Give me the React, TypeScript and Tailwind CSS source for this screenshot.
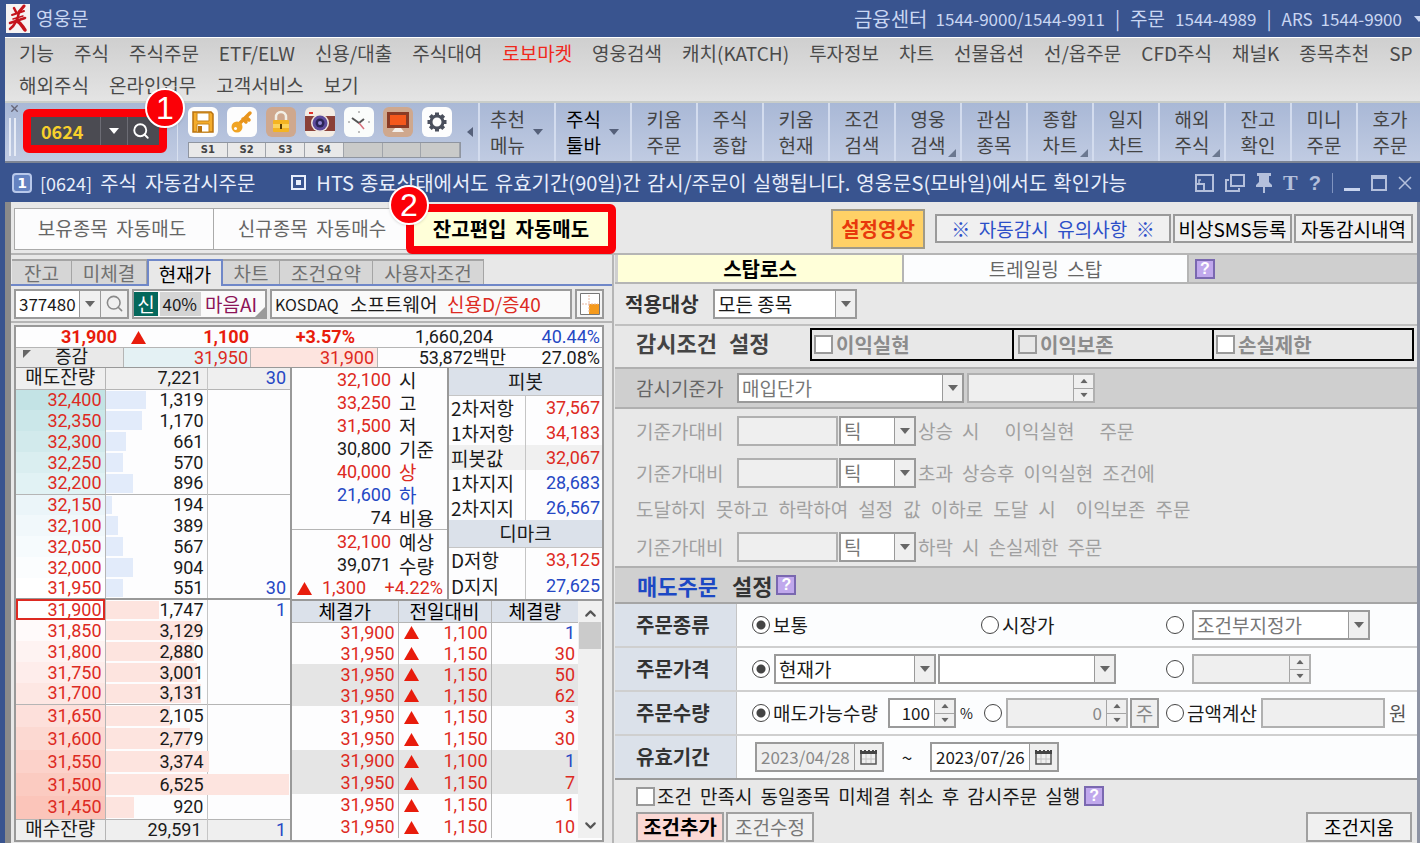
import type { ReactNode } from "react";
import { ChevronDown, ChevronUp, Search, X } from "lucide-react";
import clsx from "clsx";

const num = "font-['Roboto','Noto_Sans_CJK_KR',sans-serif] text-lg";
const smallNum = "text-[17px]";

const menuTop = [
  "기능", "주식", "주식주문", "ETF/ELW", "신용/대출", "주식대여", "로보마켓", "영웅검색", "캐치(KATCH)",
  "투자정보", "차트", "선물옵션", "선/옵주문", "CFD주식", "채널K", "종목추천", "SP",
];
const menuBottom = ["해외주식", "온라인업무", "고객서비스", "보기"];

const quickButtons = [
  { top: "키움", bottom: "주문" },
  { top: "주식", bottom: "종합" },
  { top: "키움", bottom: "현재" },
  { top: "조건", bottom: "검색" },
  { top: "영웅", bottom: "검색", more: true },
  { top: "관심", bottom: "종목" },
  { top: "종합", bottom: "차트", more: true },
  { top: "일지", bottom: "차트" },
  { top: "해외", bottom: "주식", more: true },
  { top: "잔고", bottom: "확인" },
  { top: "미니", bottom: "주문" },
  { top: "호가", bottom: "주문" },
];

const asks = [
  { price: "32,400", qty: 1319, bg: "bg-[#c3e3e5]" },
  { price: "32,350", qty: 1170, bg: "bg-[#cbe7e9]" },
  { price: "32,300", qty: 661, bg: "bg-[#d2eaec]" },
  { price: "32,250", qty: 570, bg: "bg-[#daeef0]" },
  { price: "32,200", qty: 896, bg: "bg-[#e1f2f4]" },
  { price: "32,150", qty: 194, bg: "bg-[#ebf5f9]" },
  { price: "32,100", qty: 389, bg: "bg-[#f1f8fb]" },
  { price: "32,050", qty: 567, bg: "bg-[#f6fbfd]" },
  { price: "32,000", qty: 904, bg: "bg-[#fbfdfe]" },
  { price: "31,950", qty: 551, bg: "bg-white", diff: 30 },
];

const bids = [
  { price: "31,900", qty: 1747, bg: "bg-white", diff: 1, current: true },
  { price: "31,850", qty: 3129, bg: "bg-[#fffafa]" },
  { price: "31,800", qty: 2880, bg: "bg-[#fef3f2]" },
  { price: "31,750", qty: 3001, bg: "bg-[#feedeb]" },
  { price: "31,700", qty: 3131, bg: "bg-[#fde7e3]" },
  { price: "31,650", qty: 2105, bg: "bg-[#fde0db]" },
  { price: "31,600", qty: 2779, bg: "bg-[#fcd9d2]" },
  { price: "31,550", qty: 3374, bg: "bg-[#fcd2ca]" },
  { price: "31,500", qty: 6525, bg: "bg-[#fbcbc1]" },
  { price: "31,450", qty: 920, bg: "bg-[#fbc5ba]" },
];

const priceInfo = [
  { value: "32,100", label: "시", color: "text-[#dd2a22]" },
  { value: "33,250", label: "고", color: "text-[#dd2a22]" },
  { value: "31,500", label: "저", color: "text-[#dd2a22]" },
  { value: "30,800", label: "기준" },
  { value: "40,000", label: "상", color: "text-[#dd2a22]", labelColor: "text-[#dd2a22]" },
  { value: "21,600", label: "하", color: "text-[#2548c4]", labelColor: "text-[#2548c4]" },
  { value: "74", label: "비용" },
];

interface Pivot {
  label: string;
  value: string;
  up?: boolean;
  mid?: boolean;
}

const pivots: Pivot[] = [
  { label: "2차저항", value: "37,567", up: true },
  { label: "1차저항", value: "34,183", up: true },
  { label: "피봇값", value: "32,067", up: true, mid: true },
  { label: "1차지지", value: "28,683" },
  { label: "2차지지", value: "26,567" },
];

const demark: Pivot[] = [
  { label: "D저항", value: "33,125", up: true },
  { label: "D지지", value: "27,625" },
];

const trades = [
  { price: "31,900", diff: "1,100", qty: 1, sell: true },
  { price: "31,950", diff: "1,150", qty: 30 },
  { price: "31,950", diff: "1,150", qty: 50, shade: true },
  { price: "31,950", diff: "1,150", qty: 62, shade: true },
  { price: "31,950", diff: "1,150", qty: 3 },
  { price: "31,950", diff: "1,150", qty: 30 },
  { price: "31,900", diff: "1,100", qty: 1, sell: true, shade: true },
  { price: "31,950", diff: "1,150", qty: 7, shade: true },
  { price: "31,950", diff: "1,150", qty: 1 },
  { price: "31,950", diff: "1,150", qty: 10 },
];

const Down = ({ className }: { className?: string }) => (
  <svg viewBox="0 0 10 6" className={clsx("h-[6px] w-[10px] shrink-0", className)} fill="currentColor">
    <path d="M0 0h10L5 6z" />
  </svg>
);

const UpMark = ({ className }: { className?: string }) => (
  <svg viewBox="0 0 15 13" className={clsx("h-[13px] w-[15px] shrink-0 text-[#e81c0c]", className)} fill="currentColor">
    <path d="M7.500 0L15 13H0z" />
  </svg>
);

const Badge = ({ n, className }: { n: number; className: string }) => (
  <span
    className={clsx(
      "absolute z-20 flex size-10 items-center justify-center rounded-full border-2 border-white bg-[#fb0007] font-['Liberation_Sans',sans-serif] text-[32px] leading-none font-normal text-white shadow",
      className,
    )}
  >
    {n}
  </span>
);

const Help = () => (
  <button
    aria-label="도움말"
    className="flex size-5 shrink-0 items-center justify-center border-2 border-[#7a68b0] bg-[#c0a8ec] font-['Liberation_Sans',sans-serif] text-base leading-none font-bold text-white"
  >
    ?
  </button>
);

interface SelectProps {
  label: string;
  value: string;
  className: string;
  dim?: boolean;
}

const SelectBox = ({ label, value, className, dim }: SelectProps) => (
  <span className={clsx("relative flex h-[30px] shrink-0 border-2 border-[#9a9a9a] bg-white", className)}>
    <select
      aria-label={label}
      defaultValue={value}
      className={clsx("w-full appearance-none pl-[3px] leading-6 outline-none", dim ? "text-[#777]" : "text-[#1a1a1a]")}
    >
      <option>{value}</option>
    </select>
    <span className="pointer-events-none absolute inset-y-0 right-0 flex w-5 items-center justify-center border-l border-[#9a9a9a] bg-[#efefef] text-[#666]">
      <Down />
    </span>
  </span>
);

interface SpinProps {
  label: string;
  value?: string;
  className: string;
  disabled?: boolean;
}

const Spin = ({ label, value = "", className, disabled }: SpinProps) => (
  <span
    className={clsx(
      "flex h-[30px] shrink-0 border-2",
      disabled ? "border-[#b0b0b0] bg-[#efefef]" : "border-[#9a9a9a] bg-white",
      className,
    )}
  >
    <input
      aria-label={label}
      defaultValue={value}
      disabled={disabled}
      className={clsx("w-0 min-w-0 grow pr-1 text-right", smallNum, disabled ? "text-[#888]" : "text-[#1a1a1a]")}
    />
    <span className="flex w-5 flex-col border-l border-[#a5a5a5] bg-[#efefef] text-[#666]">
      <button aria-label={`${label} 올림`} className="flex grow items-center justify-center border-b border-[#a5a5a5]">
        <Down className="scale-75 rotate-180" />
      </button>
      <button aria-label={`${label} 내림`} className="flex grow items-center justify-center">
        <Down className="scale-75" />
      </button>
    </span>
  </span>
);

const DateBox = ({ label, value, disabled }: { label: string; value: string; disabled?: boolean }) => (
  <span
    className={clsx(
      "flex h-[30px] w-[129px] shrink-0 border-2 border-[#9a9a9a]",
      disabled ? "bg-[#efefef]" : "bg-white",
    )}
  >
    <input
      aria-label={label}
      defaultValue={value}
      disabled={disabled}
      className={clsx("w-0 min-w-0 grow pl-1", smallNum, disabled ? "text-[#888]" : "text-[#1a1a1a]")}
    />
    <button
      aria-label={`${label} 달력`}
      className="flex w-7 items-center justify-center border-l border-[#9a9a9a] bg-[#efefef]"
    >
      <svg viewBox="0 0 17 15" className="h-[15px] w-[17px]" fill="none">
        <path d="M1 4v10h15V4" stroke="#555" strokeWidth="1.500" />
        <path d="M0 0h2v1h2V0h2v1h2V0h2v1h2V0h2v1h1V0h2v4H0z" fill="#444" />
        <path d="M6 4v9M11 4v9M2 9h13" stroke="#c4c4c4" />
      </svg>
    </button>
  </span>
);

interface RadioProps {
  name: string;
  label: string;
  hideLabel?: boolean;
  checked?: boolean;
  className?: string;
}

const Radio = ({ name, label, hideLabel, checked, className }: RadioProps) => (
  <label className={clsx("flex shrink-0 items-center gap-[3px] whitespace-nowrap", className)}>
    <input
      type="radio"
      name={name}
      aria-label={label}
      defaultChecked={checked}
      className="size-[18px] shrink-0 appearance-none rounded-full border border-[#444] bg-white checked:bg-[radial-gradient(circle,#444_0_4px,white_5px)]"
    />
    {!hideLabel && label}
  </label>
);

const check = "size-[19px] shrink-0 appearance-none border-2 border-[#9a9a9a]";

const TitleBar = () => (
  <header className="flex h-[37px] items-center text-[#c9d6f2]">
    <svg viewBox="0 0 24 29" className="ml-1.5 h-[29px] w-6 shrink-0">
      <rect width="24" height="29" fill="#f6f3f3" />
      <g stroke="#c4141c" strokeLinecap="round" fill="none">
        <path d="M8 4l2 4" strokeWidth="2.500" />
        <path d="M18 2l-5 6" strokeWidth="3" />
        <path d="M6 11l12-4" strokeWidth="2" />
        <path d="M7 15l10-3" strokeWidth="1.500" />
        <path d="M4 19l15-5" strokeWidth="2.500" />
        <path d="M13 8c-1 7-4 13-9 17" strokeWidth="2.500" />
        <path d="M11 17c4 2 5 5 8 9" strokeWidth="3.500" />
      </g>
    </svg>
    <h1 className="ml-1.5">영웅문</h1>
    <div className="ml-auto flex items-center whitespace-pre">
      <span className="text-xl">금융센터</span>
      <span className={clsx("ml-2", smallNum)}>1544-9000/1544-9911</span>
      <span className="mx-2.5">|</span>
      <span>주문</span>
      <span className={clsx("ml-2.5", smallNum)}>1544-4989</span>
      <span className="mx-2.5">|</span>
      <span className={smallNum}>ARS</span>
      <span className={clsx("ml-2", smallNum)}>1544-9900</span>
    </div>
    <Down className="-mr-1 ml-3" />
  </header>
);

const MenuBar = () => (
  <nav className="flex h-16 flex-col gap-0.5 overflow-hidden border-t border-white bg-linear-to-b from-[#cfcfcf] to-[#e4e4e4] pl-3.5 leading-[30px] text-[#4a4a4a]">
    {[menuTop, menuBottom].map((items, i) => (
      <div key={i} className="flex gap-5">
        {items.map((item) => (
          <a key={item} href="#" className={clsx("whitespace-nowrap", item === "로보마켓" && "text-[#f0281c]")}>
            {item}
          </a>
        ))}
      </div>
    ))}
  </nav>
);

const toolIcons: { name: string; bg: string; icon: ReactNode }[] = [
  {
    name: "저장",
    bg: "bg-[#fdfdfd]",
    icon: (
      <svg viewBox="0 0 24 24" className="size-6">
        <path d="M2 2h18l2 2v18H2z" fill="#f4ac2c" stroke="#b8720f" strokeWidth="1.500" />
        <path d="M6 3h12v8H6z" fill="#fff" stroke="#c8861c" />
        <path d="M6 14h12v8H6z" fill="#fff" stroke="#c8861c" />
        <path d="M7 16h4v6H7z" fill="#b8720f" />
      </svg>
    ),
  },
  {
    name: "키",
    bg: "bg-[#fdfdfd]",
    icon: (
      <svg viewBox="0 0 24 24" className="size-6">
        <path d="M9 14L20 3m-4 4l3 3m-6-1l3 3" stroke="#e8941c" strokeWidth="3.500" strokeLinecap="round" />
        <circle cx="7" cy="17" r="5.500" fill="#f0a424" />
        <circle cx="5.500" cy="18.500" r="1.500" fill="#fff" />
      </svg>
    ),
  },
  {
    name: "잠금",
    bg: "bg-[#cfa88e]",
    icon: (
      <svg viewBox="0 0 24 24" className="size-6">
        <path d="M7 11V7a5 5 0 0110 0v4" fill="none" stroke="#f2efe6" strokeWidth="2.500" />
        <rect x="4" y="10" width="16" height="12" rx="1" fill="#f4b422" />
        <path d="M4 14h16v4H4z" fill="#fbd35c" />
        <path d="M11 14h2v5h-2z" fill="#5a3d05" />
      </svg>
    ),
  },
  {
    name: "캡처",
    bg: "bg-[#f3ece4]",
    icon: (
      <svg viewBox="0 0 30 24" className="h-6 w-[30px]">
        <path d="M0 6h30v15H0z" fill="#8a4038" />
        <path d="M4 2h4v2H4z" fill="#e03028" />
        <circle cx="15" cy="13" r="9" fill="#efe6de" />
        <circle cx="15" cy="13" r="7.500" fill="#5d4c9c" />
        <circle cx="15" cy="13" r="4.500" fill="#2a2456" />
        <circle cx="15" cy="13" r="2" fill="#8f86d4" />
      </svg>
    ),
  },
  {
    name: "시간",
    bg: "bg-[#fafcfb]",
    icon: (
      <svg viewBox="0 0 24 24" className="size-6" fill="none">
        <path d="M12 1v2M12 21v2M1 12h2M21 12h2" stroke="#aaa" strokeWidth="1.500" />
        <path d="M5 8l7 5 5-4" stroke="#555" strokeWidth="2" />
        <path d="M12 13l5 6" stroke="#d8707c" strokeWidth="1.500" />
      </svg>
    ),
  },
  {
    name: "화면",
    bg: "bg-[#cfa88e]",
    icon: (
      <svg viewBox="0 0 24 24" className="size-6">
        <path d="M1 2h22v16H1z" fill="#8a3a24" />
        <path d="M4 5h16v10H4z" fill="#f4581c" />
        <path d="M9 18h6l3 4H6z" fill="#f4efea" />
      </svg>
    ),
  },
  {
    name: "설정",
    bg: "bg-[#fdfdfd]",
    icon: (
      <svg viewBox="0 0 24 24" className="size-6" fill="none" stroke="#4a4f5c">
        <circle cx="12" cy="12" r="6" strokeWidth="3" />
        <path
          d="M12 2.500v3M12 18.500v3M2.500 12h3M18.500 12h3M5.300 5.300l2 2M16.700 16.700l2 2M5.300 18.700l2-2M16.700 7.300l2-2"
          strokeWidth="4"
        />
      </svg>
    ),
  },
];

const Toolbar = () => (
  <div className="flex h-[62px] overflow-hidden border-y-2 border-t-[#c9cdc9] border-b-[#7d8594] bg-linear-to-b from-[#a9b8d6] to-[#c0cbe2]">
    <div className="w-[18px] shrink-0 pl-1 text-[#667]">
      <button aria-label="닫기" className="mb-1 block">
        <X size={11} strokeWidth={3} />
      </button>
      <span className="flex h-[38px] w-[7px] border-x-2 border-[#e6ebf5]" />
    </div>
    <div className="mt-1.5 flex h-11 w-36 shrink-0 rounded-md border-8 border-[#fb0007] bg-[#4b4b52]">
      <input
        aria-label="화면번호"
        defaultValue="0624"
        className="w-0 min-w-0 grow pl-2.5 text-lg font-bold text-[#f8d02c]"
      />
      <button aria-label="화면 목록" className="flex w-[27px] items-center justify-center border-l border-[#6c6c74] text-white">
        <Down />
      </button>
      <button aria-label="화면 검색" className="flex w-8 items-center border-l border-[#6c6c74] pl-1 text-white">
        <Search size={18} strokeWidth={2.500} />
      </button>
    </div>
    <span className="ml-2.5 w-px shrink-0 bg-[#d8e0ef]" />
    <div className="ml-2.5 flex w-[273px] shrink-0 flex-col justify-between pt-1 pb-[3px]">
      <div className="flex gap-[9px]">
        {toolIcons.map((t) => (
          <button
            key={t.name}
            aria-label={t.name}
            className={clsx("flex size-[30px] items-center justify-center overflow-hidden rounded-md", t.bg)}
          >
            {t.icon}
          </button>
        ))}
      </div>
      <div className="grid h-4 grid-cols-7 border border-[#8f95a0] font-['DejaVu_Sans',sans-serif] text-[10px] leading-[14px] font-bold text-[#444]">
        {["S1", "S2", "S3", "S4", "", "", ""].map((s, i) => (
          <button key={i} aria-label={`단축 ${i + 1}`} className={clsx("border-r border-[#a0a4aa]", s ? "bg-[#e9e9e9]" : "bg-[#c9cac9]")}>
            {s}
          </button>
        ))}
      </div>
    </div>
    <button aria-label="이전" className="flex w-[17px] shrink-0 items-center justify-center text-[#55607a]">
      <Down className="rotate-90" />
    </button>
    {[
      { top: "추천", bottom: "메뉴", color: "text-[#444]" },
      { top: "주식", bottom: "툴바", color: "text-black" },
    ].map((b) => (
      <button
        key={b.bottom}
        className={clsx("flex w-[76px] shrink-0 items-center gap-2 border-l-2 border-[#d3dcee] pl-2.5 leading-[26px]", b.color)}
      >
        <span>
          {b.top}
          <br />
          {b.bottom}
        </span>
        <Down className="text-[#55607a]" />
      </button>
    ))}
    {quickButtons.map((b, i) => (
      <button
        key={i}
        className="relative w-[66px] shrink-0 border-l-2 border-[#d3dcee] text-center leading-[26px] text-[#444]"
      >
        {b.top}
        <br />
        {b.bottom}
        {b.more && (
          <svg viewBox="0 0 8 8" className="absolute right-1 bottom-1 size-2" fill="#6b7890">
            <path d="M8 0v8H0z" />
          </svg>
        )}
      </button>
    ))}
  </div>
);

const WindowTitle = () => (
  <div className="flex h-[39px] items-center overflow-hidden pr-2 pl-[7px] whitespace-nowrap text-[#e8eefb]">
    <span className="flex size-5 shrink-0 items-center justify-center rounded-sm border-2 border-[#b8c8ea] bg-[#6482c0] font-['DejaVu_Sans',sans-serif] text-sm font-bold text-white">
      1
    </span>
    <h2 className="ml-2 flex items-center gap-2 text-xl">
      <span className="text-lg">[0624]</span>
      <span>주식</span>
      <span>자동감시주문</span>
    </h2>
    <span className="ml-9 flex size-[15px] shrink-0 items-center justify-center border-2 border-[#e8eefb]">
      <span className="size-[5px] bg-[#e8eefb]" />
    </span>
    <p className="ml-2.5 flex gap-1.5 text-xl">
      {["HTS", "종료상태에서도", "유효기간(90일)간", "감시/주문이", "실행됩니다.", "영웅문S(모바일)에서도", "확인가능"].map((w) => (
        <span key={w}>{w}</span>
      ))}
    </p>
    <div className="ml-auto flex items-center gap-[11px] text-[#b4c0dc]">
      <button aria-label="크기">
        <svg viewBox="0 0 19 18" className="h-[18px] w-[19px]" fill="none" stroke="currentColor" strokeWidth="2">
          <path d="M1 9V1h17v16h-8" />
          <path d="M1 10h8v7H1z" />
          <path d="M6 6h-2v3" strokeWidth="1.500" />
        </svg>
      </button>
      <button aria-label="복사">
        <svg viewBox="0 0 20 18" className="h-[18px] w-5" fill="none" stroke="currentColor" strokeWidth="2">
          <path d="M6 1h13v11H6z" />
          <path d="M4 6H1v11h13v-3" />
        </svg>
      </button>
      <button aria-label="고정">
        <svg viewBox="0 0 16 20" className="h-5 w-4" fill="currentColor">
          <path d="M1 0h14v3h-2v6l3 3v2H9v6H7v-6H0v-2l3-3V3H1z" />
        </svg>
      </button>
      <button aria-label="글꼴" className="font-['Liberation_Serif',serif] text-[22px] leading-none font-bold">
        T
      </button>
      <button aria-label="도움말" className="font-['Liberation_Sans',sans-serif] text-xl leading-none font-bold">
        ?
      </button>
      <span className="h-5 w-px bg-[#8094c0]" />
      <button aria-label="최소화" className="flex h-4 w-4 items-end">
        <span className="h-[3px] w-full bg-[#c8d4ee]" />
      </button>
      <button aria-label="최대화" className="h-4 w-4 border-2 border-t-4 border-current" />
      <button aria-label="닫기">
        <svg viewBox="0 0 14 14" className="size-[14px]" stroke="currentColor" strokeWidth="1.500">
          <path d="M1 1l12 12M13 1L1 13" />
        </svg>
      </button>
    </div>
  </div>
);

const TopTabs = () => (
  <div className="flex h-[51px] items-center border-b-2 border-[#b5b5b5]">
    <div className="relative ml-[3px] flex items-center">
      <button className="h-[42px] w-[200px] border border-[#aaa] bg-[#fcfcfd] pr-1 text-[#666]">보유종목&nbsp; 자동매도</button>
      <button className="h-[42px] w-[192px] border-y border-[#aaa] bg-[#fcfcfd] pl-1 text-[#666]">신규종목&nbsp; 자동매수</button>
      <button className="h-[50px] w-[210px] rounded-md border-8 border-[#fb0007] bg-[#ffffd9] text-xl font-bold text-black">
        잔고편입&nbsp; 자동매도
      </button>
      <Badge n={2} className="-top-[19px] left-[375px]" />
    </div>
    <div className="ml-auto flex shrink-0 items-center gap-0.5 pr-1">
      <button className="mr-2 h-10 w-[94px] border-2 border-[#a09a88] bg-[#ffd166] text-xl font-bold text-[#e8380c]">설정영상</button>
      <button className="h-[29px] w-[236px] border-2 border-[#9a9a9a] bg-[#f0f0f0] leading-6 text-[#2c4fc8]">
        ※&nbsp; 자동감시&nbsp; 유의사항&nbsp; ※
      </button>
      <button className="h-[29px] w-[119px] border-2 border-[#9a9a9a] bg-[#f0f0f0] leading-6 whitespace-nowrap text-black">비상SMS등록</button>
      <button className="h-[29px] w-[119px] border-2 border-[#9a9a9a] bg-[#f0f0f0] leading-6 whitespace-nowrap text-black">자동감시내역</button>
    </div>
  </div>
);

const stockTabs = [
  { name: "잔고", width: "w-[60px]" },
  { name: "미체결", width: "w-[75px]" },
  { name: "현재가", width: "w-[76px]", active: true },
  { name: "차트", width: "w-[57px]" },
  { name: "조건요약", width: "w-[93px]" },
  { name: "사용자조건", width: "w-[111px]" },
];

interface BookRowProps {
  row: { price: string; qty: number; bg: string; diff?: number; current?: boolean };
  index: number;
  bid?: boolean;
}

const BookRow = ({ row, index, bid }: BookRowProps) => (
  <tr className={clsx(bid && index > 4 ? "h-[23px]" : "h-[21px]", index === 4 && "border-b border-[#b5b5b5]")}>
    <td
      className={clsx(
        "border-r border-[#b5b5b5] pr-[3px] text-[#dd2a22]",
        row.bg,
        row.current && "outline-2 -outline-offset-2 outline-[#dd2a22]",
      )}
    >
      {row.price}
    </td>
    <td className="relative border-r border-[#c5c5c5] pr-[3px]">
      <span
        className={clsx("absolute top-px bottom-px left-0 z-0", bid ? "bg-[#fde4df]" : "bg-[#e2ebfa]")}
        style={{ width: Math.min(183, Math.round(row.qty * 0.0304)) }}
      />
      <span className="relative z-10">{row.qty.toLocaleString("en-US")}</span>
    </td>
    <td className="pr-1 text-[#2548c4]">{row.diff}</td>
  </tr>
);

const bookLabel = "border-r border-[#b5b5b5] text-center text-[19px] leading-5 font-normal whitespace-nowrap";

const OrderBook = () => (
  <table className={clsx("w-[274px] shrink-0 table-fixed border-collapse text-right leading-5", num)}>
    <colgroup>
      <col className="w-[89px]" />
      <col className="w-[102px]" />
      <col className="w-[83px]" />
    </colgroup>
    <thead>
      <tr className="h-[21px] border-b border-[#b5b5b5] bg-[#efefef] leading-5">
        <th className={bookLabel}>매도잔량</th>
        <td className="border-r border-[#c5c5c5] pr-[5px]">7,221</td>
        <td className="pr-1 text-[#2548c4]">30</td>
      </tr>
    </thead>
    <tbody className="leading-5">
      {asks.map((row, i) => (
        <BookRow key={row.price} row={row} index={i} />
      ))}
    </tbody>
    <tbody className="border-t-2 border-[#999] leading-5">
      {bids.map((row, i) => (
        <BookRow key={row.price} row={row} index={i} bid />
      ))}
    </tbody>
    <tfoot>
      <tr className="h-[21px] border-t border-[#b5b5b5] bg-[#efefef] leading-5">
        <th className={bookLabel}>매수잔량</th>
        <td className="border-r border-[#c5c5c5] pr-[5px]">29,591</td>
        <td className="pr-1 text-[#2548c4]">1</td>
      </tr>
    </tfoot>
  </table>
);

const PivotTable = ({ title, rows, height }: { title: string; rows: Pivot[]; height: string }) => (
  <table className="w-full table-fixed border-collapse leading-6">
    <thead>
      <tr className="h-[27px] border-b border-[#c5c5c5] bg-[#dbe1ea]">
        <th colSpan={2} className="font-normal">
          {title}
        </th>
      </tr>
    </thead>
    <tbody>
      {rows.map((row) => (
        <tr key={row.label} className={clsx(height, row.mid && "bg-[#f0f0f0]")}>
          <th className="border-r border-[#c5c5c5] pl-0.5 text-left font-normal whitespace-nowrap">{row.label}</th>
          <td className={clsx("pr-0.5 text-right leading-5", num, row.up ? "text-[#dd2a22]" : "text-[#2548c4]")}>
            {row.value}
          </td>
        </tr>
      ))}
    </tbody>
  </table>
);

const TradeList = () => (
  <div className="flex border-t-2 border-[#999]">
    <table className="grow table-fixed border-collapse text-right text-[#dd2a22]">
      <thead>
        <tr className="h-[21px] border-b border-[#b5b5b5] bg-[#dbe1ea] text-center leading-5 text-black">
          <th className="w-[106px] border-r border-[#b5b5b5] font-normal">체결가</th>
          <th className="w-[93px] border-r border-[#b5b5b5] font-normal">전일대비</th>
          <th className="font-normal">체결량</th>
        </tr>
      </thead>
      <tbody className={num}>
        {trades.map((t, i) => (
          <tr key={i} className={clsx("leading-5", i > 3 ? "h-[22px]" : "h-[21px]", t.shade && "bg-[#e5e5e5]")}>
            <td className="border-r border-[#b5b5b5] pr-[3px]">{t.price}</td>
            <td className="border-r border-[#b5b5b5] pr-[3px] pl-[5px]">
              <span className="flex items-center justify-between">
                <UpMark />
                {t.diff}
              </span>
            </td>
            <td className={clsx("pr-[3px]", t.sell && "text-[#2548c4]")}>{t.qty}</td>
          </tr>
        ))}
      </tbody>
    </table>
    <div className="flex w-6 flex-col items-center justify-between bg-[#f0f0f0] pt-1 pb-1 text-[#555]">
      <ChevronUp size={17} strokeWidth={3} />
      <span className="h-[27px] w-[22px] bg-[#cbcbcb]" />
      <span className="grow" />
      <ChevronDown size={17} strokeWidth={3} />
    </div>
  </div>
);

const StockPanel = () => (
  <section className="w-[603px] shrink-0 border-r-2 border-[#b5b5b5]">
    <div className="flex h-[31px] items-end border-b-2 border-[#6f87c8] pl-px">
      {stockTabs.map((t) => (
        <button
          key={t.name}
          className={clsx(
            "shrink-0 whitespace-nowrap",
            t.width,
            t.active
              ? "-mb-0.5 h-[27px] border-x-2 border-t-2 border-[#6f87c8] bg-[#e8e8e8] leading-6 text-black"
              : "h-[25px] border-t-2 border-r border-[#a5a5a5] bg-[#d6d6d6] leading-[22px] text-[#707070]",
          )}
        >
          {t.name}
        </button>
      ))}
    </div>
    <div className="flex h-[37px] items-center gap-[3px] border-b-2 border-[#b5b5b5] pr-2 pl-[3px]">
      <div className="flex h-[30px] w-[115px] border-2 border-[#9a9a9a] bg-white">
        <input aria-label="종목코드" defaultValue="377480" className={clsx("w-0 min-w-0 grow pl-[3px]", smallNum)} />
        <button aria-label="종목 목록" className="flex w-[21px] items-center justify-center border-l border-[#9a9a9a] bg-[#f0f0f0] text-[#666]">
          <Down />
        </button>
        <button aria-label="종목 검색" className="flex w-[27px] items-center justify-center border-l border-[#9a9a9a] bg-[#f0f0f0] text-[#8a8a8a]">
          <Search size={19} />
        </button>
      </div>
      <div className="relative flex h-[30px] w-[135px] items-center border-2 border-[#9a9a9a] bg-[#fafafa] leading-6 whitespace-nowrap">
        <span className="w-6 bg-[#04685c] text-center text-white">신</span>
        <span className="ml-0.5 w-[41px] bg-[#d4d4d4] pr-1 text-right text-[17px] leading-6">40%</span>
        <span className="ml-1 text-[#8c1458]">마음AI</span>
        <svg viewBox="0 0 10 10" className="absolute right-0 bottom-0 size-[10px]" fill="#9a9a9a">
          <path d="M10 0v10H0z" />
        </svg>
      </div>
      <div className="flex h-[30px] grow items-center border-2 border-[#9a9a9a] bg-[#fafafa] pl-[3px] leading-6 whitespace-nowrap">
        <span className="w-[75px] text-base leading-6">KOSDAQ</span>
        <span className="w-[97px]">소프트웨어</span>
        <span className="text-[#dd2a22]">신용D/증40</span>
      </div>
      <button aria-label="배치" className="flex h-[30px] w-[29px] items-center justify-center border-2 border-[#9a9a9a] bg-[#f4f4f4]">
        <svg viewBox="0 0 20 22" className="h-[22px] w-5">
          <path d="M.5.5h19v21H.5z" fill="#fff" stroke="#777" />
          <path d="M9 11h10v10H9z" fill="#f59a1c" />
          <path d="M9 2v18M2 11h16" stroke="#e8b8a0" strokeDasharray="2 1" />
        </svg>
      </button>
    </div>
    <div className="mt-0.5 mr-2 ml-[3px] border-2 border-[#999] bg-[#fdfdfe]">
      <div className={clsx("flex h-[21px] items-center border-b border-[#b5b5b5]", num)}>
        <span className="w-[101px] text-right leading-5 font-bold text-[#e81c0c]">31,900</span>
        <UpMark className="ml-3.5" />
        <span className="w-[103px] text-right leading-5 font-bold text-[#e81c0c]">1,100</span>
        <span className="w-[106px] text-right leading-5 font-bold text-[#e81c0c]">+3.57%</span>
        <span className="w-[138px] text-right leading-5">1,660,204</span>
        <span className="grow pr-0.5 text-right leading-5 text-[#2548c4]">40.44%</span>
      </div>
      <div className={clsx("flex h-5 items-stretch border-b border-[#999] whitespace-nowrap", num)}>
        <span className="flex w-[108px] justify-center border-r border-[#b5b5b5] bg-[#e9e9e9] text-lg leading-[18px]">
          <svg viewBox="0 0 8 8" className="mt-0.5 mr-6 -ml-7 size-2" fill="#666">
            <path d="M0 0h8L0 8z" />
          </svg>
          증감
        </span>
        <span className="w-[127px] border-r border-[#b5b5b5] bg-[#e4f1f4] pr-0.5 text-right leading-5 text-[#dd2a22]">31,950</span>
        <span className="w-[127px] border-r border-[#b5b5b5] bg-[#fde4df] pr-[3px] text-right leading-5 text-[#dd2a22]">31,900</span>
        <span className="w-[128px] text-right leading-5">53,872백만</span>
        <span className="grow pr-0.5 text-right leading-5">27.08%</span>
      </div>
      <div className="flex">
        <OrderBook />
        <div className="min-w-0 grow border-l-2 border-[#999]">
          <div className="flex h-[231px]">
            <div className="flex w-[155px] shrink-0 flex-col">
              {priceInfo.map((p) => (
                <div key={p.label} className="flex h-[23px] items-center leading-[23px]">
                  <span className={clsx("w-[99px] text-right", num, p.color)}>{p.value}</span>
                  <span className={clsx("ml-2", p.labelColor)}>{p.label}</span>
                </div>
              ))}
              <div className="flex h-6 items-center border-t border-[#b5b5b5] leading-[23px]">
                <span className={clsx("w-[99px] text-right text-[#dd2a22]", num)}>32,100</span>
                <span className="ml-2">예상</span>
              </div>
              <div className="flex h-6 items-center leading-[23px]">
                <span className={clsx("w-[99px] text-right", num)}>39,071</span>
                <span className="ml-2">수량</span>
              </div>
              <div className={clsx("flex h-[22px] items-center pr-1 pl-[5px] text-[#dd2a22]", num)}>
                <UpMark />
                <span className="ml-2.5">1,300</span>
                <span className="ml-auto">+4.22%</span>
              </div>
            </div>
            <div className="grow border-l-2 border-[#999]">
              <PivotTable title="피봇" rows={pivots} height="h-[25px]" />
              <PivotTable title="디마크" rows={demark} height="h-[26px]" />
            </div>
          </div>
          <TradeList />
        </div>
      </div>
    </div>
  </section>
);

const TickRow = ({ label, children }: { label: string; children: ReactNode }) => (
  <div className="flex h-[30px] items-center whitespace-nowrap">
    <span className="w-[101px] shrink-0">기준가대비</span>
    <input aria-label={label} disabled className="h-[30px] w-[101px] shrink-0 border-2 border-[#b0b0b0] bg-[#efefef]" />
    <SelectBox label={`${label} 단위`} value="틱" className="ml-px w-[77px]" dim />
    <span className="ml-0.5 flex gap-[9px]">{children}</span>
  </div>
);

const OrderRow = ({ label, children }: { label: string; children: ReactNode }) => (
  <div className="flex h-[44px] border-b-2 border-[#cfcfcf] last:border-[#9a9a9a]">
    <div className="flex w-[122px] shrink-0 items-center border-r border-[#c5c5c5] bg-[#dbe1ea] pl-[21px] text-xl font-bold text-[#333]">
      {label}
    </div>
    <div className="flex grow items-center bg-[#fcfdfe] pr-2 pl-[15px] text-[#1a1a1a]">{children}</div>
  </div>
);

const OrderPanel = () => (
  <section className="min-w-0 grow pl-px">
    <div className="flex h-[29px] items-end border-b-2 border-[#b5b5b5] bg-[#cfcfcf] pl-[3px] leading-[26px]">
      <button className="h-full w-[286px] border-r-2 border-[#b5b5b5] bg-[#ffffd9] text-xl leading-[26px] font-bold text-black">
        스탑로스
      </button>
      <button className="h-full w-[285px] border-r-2 border-[#b5b5b5] bg-[#fcfdfe] text-[#666]">트레일링&nbsp; 스탑</button>
      <span className="flex h-full items-center pl-1.5">
        <Help />
      </span>
    </div>
    <div className="flex h-[42px] items-center border-b-2 border-[#c0c0c0] pl-2.5">
      <span className="w-[88px] text-xl font-bold text-[#333]">적용대상</span>
      <SelectBox label="적용대상" value="모든 종목" className="w-36" />
    </div>
    <div className="flex h-[43px] border-b-2 border-[#b0b0b0] pt-0.5 pr-[3px] pl-[21px]">
      <h3 className="flex w-[174px] shrink-0 gap-3 text-[22px] leading-7 font-bold text-[#444]">
        <span>감시조건</span>
        <span>설정</span>
      </h3>
      <div className="grid h-[33px] grow grid-cols-3 border-2 border-black text-xl font-bold text-[#8c8c8c]">
        {["이익실현", "이익보존", "손실제한"].map((c, i) => (
          <label key={c} className={clsx("flex items-center gap-[3px] pl-0.5", i > 0 && "border-l-2 border-black")}>
            <input type="checkbox" className={clsx(check, i === 1 ? "ml-0.5 bg-[#e8e8e8]" : "bg-white")} />
            {c}
          </label>
        ))}
      </div>
    </div>
    <div className="flex h-10 items-center border-b-2 border-[#b0b0b0] bg-[#cfcfcf] pl-[21px] text-[#666]">
      <span className="w-[101px]">감시기준가</span>
      <SelectBox label="감시기준가" value="매입단가" className="w-[227px]" dim />
      <Spin label="기준가격" className="ml-[3px] w-[128px]" disabled />
    </div>
    <div className="flex h-[159px] flex-col border-b-2 border-[#b0b0b0] pt-[7px] pl-[21px] text-[#a0a0a0]">
      <TickRow label="이익실현 기준">
        <span>상승</span>
        <span>시</span>
        <span className="ml-4">이익실현</span>
        <span className="ml-4">주문</span>
      </TickRow>
      <div className="mt-3">
        <TickRow label="이익보존 기준">
          <span>초과</span>
          <span>상승후</span>
          <span>이익실현</span>
          <span>조건에</span>
        </TickRow>
      </div>
      <p className="mt-1.5 flex gap-2.5 leading-[30px] whitespace-nowrap">
        {["도달하지", "못하고", "하락하여", "설정", "값", "이하로", "도달", "시", "", "이익보존", "주문"].map((w, i) => (
          <span key={i}>{w}</span>
        ))}
      </p>
      <div className="mt-2">
        <TickRow label="손실제한 기준">
          <span>하락</span>
          <span>시</span>
          <span>손실제한</span>
          <span>주문</span>
        </TickRow>
      </div>
    </div>
    <h3 className="flex h-9 items-center border-b-2 border-[#a5a5a5] bg-[#d0d0d0] pl-[22px] text-[22px] font-bold text-[#333]">
      <span className="mr-3.5 text-[#1c48c4]">매도주문</span>설정
      <span className="ml-1 flex">
        <Help />
      </span>
    </h3>
    <div>
      <OrderRow label="주문종류">
        <Radio name="type" label="보통" checked className="w-[229px]" />
        <Radio name="type" label="시장가" className="w-[185px]" />
        <Radio name="type" label="조건부지정가" hideLabel />
        <SelectBox label="조건부 주문종류" value="조건부지정가" className="ml-2 w-[178px]" dim />
      </OrderRow>
      <OrderRow label="주문가격">
        <Radio name="price" label="현재가" hideLabel checked />
        <SelectBox label="가격 기준" value="현재가" className="ml-1 w-[162px]" />
        <SelectBox label="가격 차이" value="" className="ml-0.5 w-[178px]" />
        <Radio name="price" label="지정 가격" hideLabel className="ml-[50px]" />
        <Spin label="지정 가격" className="ml-2 w-[119px]" disabled />
      </OrderRow>
      <OrderRow label="주문수량">
        <Radio name="qty" label="매도가능수량" checked className="w-[136px]" />
        <Spin label="비율" value="100" className="w-[68px]" />
        <span className="ml-1 w-6 text-sm">%</span>
        <Radio name="qty" label="수량" hideLabel />
        <Spin label="수량" value="0" className="ml-1 w-[122px]" disabled />
        <button className="ml-0.5 h-[30px] w-[29px] shrink-0 border-2 border-[#9a9a9a] bg-[#efefef] leading-6 text-[#888]">주</button>
        <Radio name="qty" label="금액계산" className="ml-[7px]" />
        <input aria-label="금액" disabled className="ml-1 h-[30px] w-[124px] shrink-0 border-2 border-[#b0b0b0] bg-[#efefef]" />
        <span className="ml-1 text-[#555]">원</span>
      </OrderRow>
      <OrderRow label="유효기간">
        <span className="w-[3px]" />
        <DateBox label="시작일" value="2023/04/28" disabled />
        <span className="w-[46px] text-center">~</span>
        <DateBox label="종료일" value="2023/07/26" />
      </OrderRow>
    </div>
    <label className="flex h-8 items-center gap-0.5 pl-[21px] whitespace-nowrap text-[#1a1a1a]">
      <input type="checkbox" className={clsx(check, "bg-white")} />
      <span className="flex gap-2 pr-0.5">
        {["조건", "만족시", "동일종목", "미체결", "취소", "후", "감시주문", "실행"].map((w) => (
          <span key={w}>{w}</span>
        ))}
      </span>
      <Help />
    </label>
    <div className="flex h-[31px] gap-0.5 pr-[5px] pl-[21px] leading-6">
      <button className="h-[30px] w-[88px] border-2 border-[#a0a0a0] bg-[#fbd9d5] text-xl leading-6 font-bold text-black">조건추가</button>
      <button className="h-[30px] w-[88px] border-2 border-[#a0a0a0] bg-[#f0f0f0] text-[#777]">조건수정</button>
      <button className="ml-auto h-[30px] w-[106px] border-2 border-[#a0a0a0] bg-[#f0f0f0] text-black">조건지움</button>
    </div>
  </section>
);

const App = () => (
  <div className="min-h-screen overflow-hidden bg-[#39548f] font-['Noto_Sans_CJK_KR',sans-serif] text-[19px] text-[#1a1a1a]">
    <TitleBar />
    <div className="relative pl-[5px]">
      <MenuBar />
      <Toolbar />
      <Badge n={1} className="top-[51px] left-[145px]" />
      <WindowTitle />
    </div>
    <main className="ml-[5px] border-r-[3px] border-l-[6px] border-r-[#8d93a3] border-l-[#8a8a8a] bg-[#e8e8e8] pt-0.5">
      <TopTabs />
      <div className="flex">
        <StockPanel />
        <OrderPanel />
      </div>
    </main>
  </div>
);

export default App;
